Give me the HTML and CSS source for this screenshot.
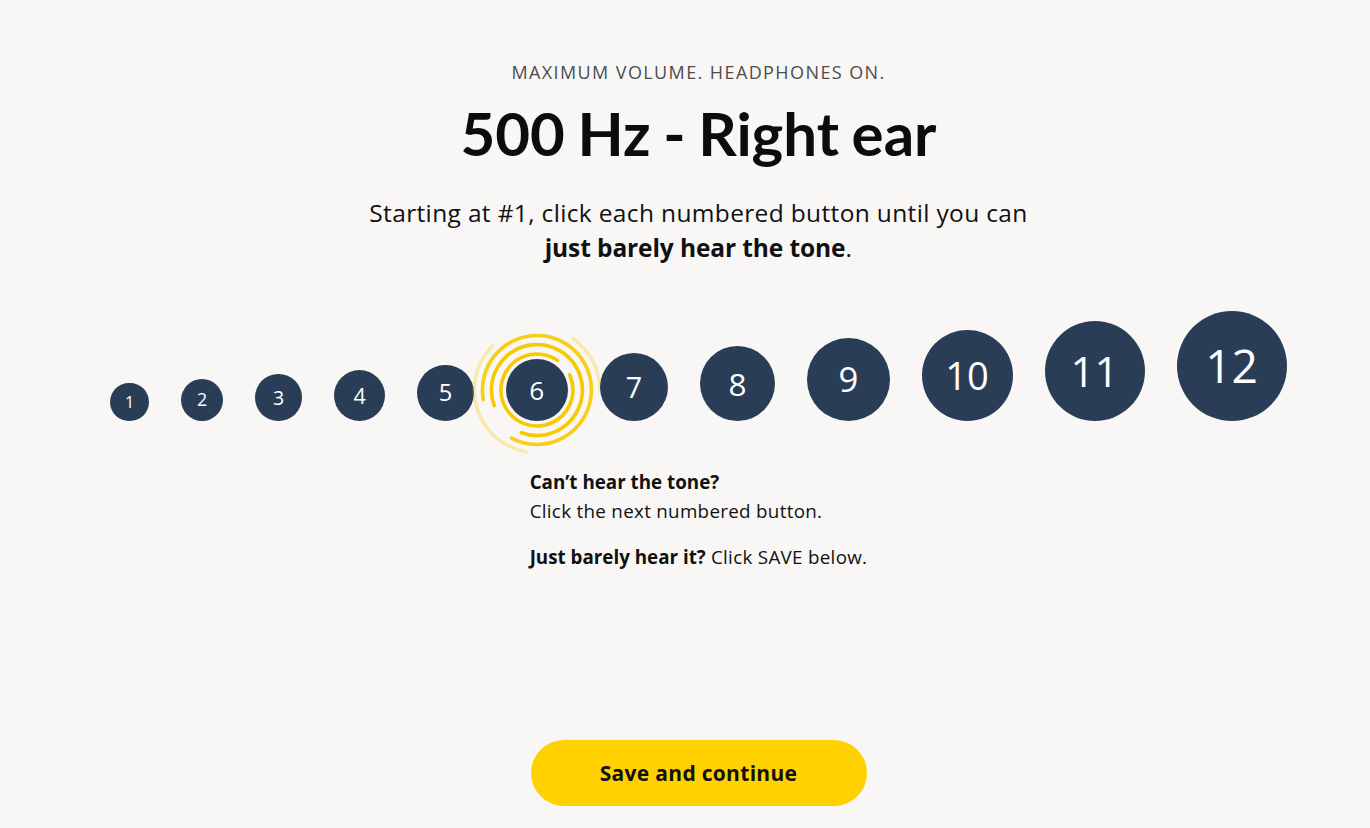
FILE: index.html
```
<!DOCTYPE html>
<html lang="en">
<head>
<meta charset="utf-8">
<title>500 Hz - Right ear</title>
<link rel="stylesheet" href="styles.css">
</head>
<body>
<main class="page">
  <p class="eyebrow">MAXIMUM VOLUME. HEADPHONES ON.</p>
  <h1 class="title">500 Hz - Right ear</h1>
  <p class="lead">Starting at #1, click each numbered button until you can<br><strong>just barely hear the tone</strong>.</p>

  <div class="levels">
    <button class="level" style="--d:38.5px">1</button>
    <button class="level" style="--d:42.4px">2</button>
    <button class="level" style="--d:46.6px">3</button>
    <button class="level" style="--d:51.3px">4</button>
    <button class="level" style="--d:56.4px">5</button>
    <button class="level active" style="--d:62.1px">6
      <svg class="ripple" viewBox="-70 -70 140 140" aria-hidden="true">
        <path class="ring" d="M32.6 -15.2 A36 36 0 1 1 20.6 -29.5"/>
        <path class="ring" d="M-42.8 15.6 A45.5 45.5 0 1 1 -15.6 42.8"/>
        <path class="ring ring-3" d="M-53.7 9.5 A54.5 54.5 0 1 1 -25.6 48.1"/>
        <path class="ring ring-faint" d="M-10.9 61.8 A62.8 62.8 0 0 1 -44.4 -44.4"/>
        <path class="ring ring-faint" d="M36 -51.4 A62.8 62.8 0 0 1 62.8 0"/>
      </svg>
    </button>
    <button class="level" style="--d:68.3px">7</button>
    <button class="level" style="--d:75.1px">8</button>
    <button class="level" style="--d:82.6px">9</button>
    <button class="level" style="--d:90.9px">10</button>
    <button class="level" style="--d:100px">11</button>
    <button class="level" style="--d:110px">12</button>
  </div>

  <div class="hints">
    <p><strong>Can’t hear the tone?</strong><br>Click the next numbered button.</p>
    <p><strong>Just barely hear it?</strong> Click SAVE below.</p>
  </div>

  <button class="save">Save and continue</button>
</main>
</body>
</html>
```
FILE: styles.css
```
html, body {
  margin: 0;
  padding: 0;
  background: #f8f7f5;
}

body {
  font-family: "Open Sans", Lato, sans-serif;
  color: #111;
}

.page {
  padding: 60px 0 0 27px;
  text-align: center;
}

.eyebrow {
  margin: 0;
  font-size: 18px;
  line-height: 24px;
  letter-spacing: 1.4px;
  color: #4d4d4d;
}

.title {
  margin: 14px 0 0;
  font-family: Lato, "Open Sans", sans-serif;
  font-size: 60px;
  line-height: 70px;
  font-weight: 700;
  word-spacing: -2px;
  color: #0c0c0c;
}

.lead {
  margin: 27px 0 0;
  font-size: 24.5px;
  line-height: 35px;
  letter-spacing: 0.35px;
  color: #111;
}

.lead strong {
  font-weight: 700;
  letter-spacing: -0.1px;
}

.levels {
  margin-top: 46px;
  display: flex;
  justify-content: center;
  align-items: flex-end;
  gap: 32px;
}

.level {
  position: relative;
  flex: none;
  width: var(--d);
  height: var(--d);
  padding: 0;
  border: 0;
  border-radius: 50%;
  background: #293e56;
  color: #fff;
  font-family: "Open Sans", sans-serif;
  font-weight: 400;
  font-size: calc(var(--d) * 0.42);
  line-height: 1;
  display: flex;
  align-items: center;
  justify-content: center;
  cursor: pointer;
}

.ripple {
  position: absolute;
  left: 50%;
  top: 50%;
  width: 140px;
  height: 140px;
  transform: translate(-50%, -50%);
  pointer-events: none;
  overflow: visible;
}

.ring {
  fill: none;
  stroke: #f8c900;
  stroke-width: 3.6;
  stroke-linecap: round;
}

.ring-3 {
  opacity: 0.9;
}

.ring-faint {
  opacity: 0.3;
  stroke-width: 3.4;
}

.hints {
  width: fit-content;
  margin: 47px auto 0;
  text-align: left;
  font-size: 18.8px;
  line-height: 29px;
  letter-spacing: 0.3px;
}

.hints p {
  margin: 0;
}

.hints p + p {
  margin-top: 17px;
}

.hints strong {
  font-weight: 700;
  letter-spacing: 0;
}

.save {
  display: block;
  width: 336px;
  height: 66px;
  margin: 168px auto 0;
  border: 0;
  border-radius: 33px;
  background: #ffd100;
  color: #111;
  font-family: "Open Sans", sans-serif;
  font-weight: 700;
  font-size: 21px;
  letter-spacing: 0.3px;
  cursor: pointer;
}
```
